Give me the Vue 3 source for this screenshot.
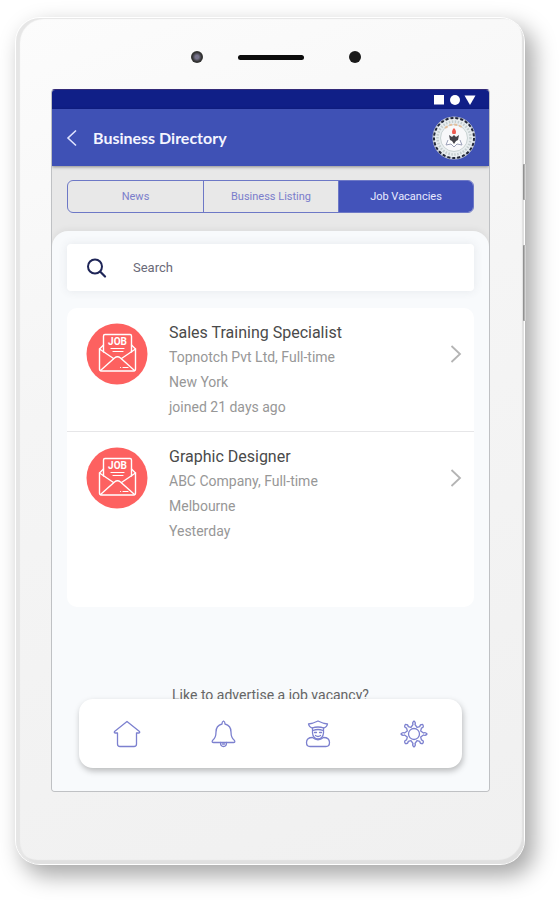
<template>
  <main class="stage">
    <div class="tablet">
      <span class="side-button side-button-power"></span>
      <span class="side-button side-button-volume"></span>

      <div class="camera-row">
        <span class="lens"></span>
        <span class="speaker"></span>
        <span class="sensor"></span>
      </div>

      <div class="screen">
        <div class="status-bar">
          <svg width="44" height="12" viewBox="0 0 44 12" fill="#fff" aria-hidden="true">
            <rect x="2" y="1" width="10" height="9.5" />
            <circle cx="23" cy="6" r="5" />
            <path d="M32.500 1.500H43.500L38 11Z" />
          </svg>
        </div>

        <header class="app-bar">
          <button class="back-button" type="button" aria-label="Back">
            <svg width="12" height="18" viewBox="0 0 12 18" aria-hidden="true">
              <path d="M10 1.500L2 9L10 16.500" fill="none" stroke="#dfe3ff" stroke-width="1.600" />
            </svg>
          </button>
          <h1 class="app-title">Business Directory</h1>
          <svg class="crest" width="44" height="44" viewBox="0 0 44 44" aria-hidden="true">
            <circle cx="22" cy="22" r="20.500" fill="#e9eef0" stroke="#c5cbd6" stroke-width="2" />
            <circle cx="22" cy="22" r="20" fill="none" stroke="#23283a" stroke-width="2" stroke-dasharray="3 2" />
            <circle cx="22" cy="22" r="16.500" fill="none" stroke="#c3cccd" stroke-width="2.500" stroke-dasharray="1.500 1.500" />
            <circle cx="22" cy="22" r="13.500" fill="#f8f8fa" stroke="#c9d3d3" />
            <path d="M13 12q9-7 18 0" fill="none" stroke="#e5bf9c" stroke-width="2" stroke-dasharray="3 2" />
            <path d="M16 24l-2 5 5-1 3 3 3-3 5 1-2-5" fill="#fff" stroke="#9ba0b8" />
            <path d="M17 19l3 2 2-2 2 2 3-2-1 5-2 1-2 3-2-3-2-1Z" fill="#44434a" />
            <path d="M22 12q3 3 1.500 6h-3q-1.500-3 1.500-6Z" fill="#ee5a50" />
          </svg>
        </header>

        <div class="tabs" role="tablist" aria-label="Directory sections">
          <button
            v-for="tab in tabs"
            :key="tab"
            class="tab"
            :class="{ active: tab === activeTab }"
            role="tab"
            type="button"
            :aria-selected="tab === activeTab"
            @click="activeTab = tab"
          >
            {{ tab }}
          </button>
        </div>

        <section class="panel">
          <div class="search">
            <label for="job-search" class="search-label" aria-label="Search">
              <svg width="20" height="20" viewBox="0 0 20 20" aria-hidden="true">
                <g fill="none" stroke="#1e2557" stroke-linecap="round">
                  <circle cx="8" cy="8.500" r="7" stroke-width="2" />
                  <path d="M13.300 13.800L18 18.500" stroke-width="2.200" />
                </g>
              </svg>
            </label>
            <input id="job-search" v-model="query" class="search-input" type="text" placeholder="Search">
          </div>

          <ul class="job-list">
            <li v-for="job in filteredJobs" :key="job.title" class="job">
              <a class="job-link" href="#" @click.prevent>
                <svg class="job-icon" width="62" height="62" viewBox="0 0 62 62" aria-hidden="true">
                  <circle cx="31" cy="31" r="30.500" fill="#fd6160" />
                  <g fill="none" stroke="#fff" stroke-width="1.400" stroke-linejoin="round" stroke-linecap="round">
                    <path d="M17.500 29V13Q17.500 11.500 19 11.500H44Q45.500 11.500 45.500 13V29" />
                    <path d="M17.500 22L13.500 26V46Q13.500 48 15.500 48H47.500Q49.500 48 49.500 46V26L45.500 22" />
                    <path d="M13.500 26L27.500 35.500M49.500 26L35.500 35.500" />
                    <path d="M14.500 47.500L28.500 35Q31.500 32.500 34.500 35L48.500 47.500" />
                    <path d="M25 25.500H38M27 28.500H37M37 44.500H42M34.500 44.500H34.600" stroke-width="1.200" />
                  </g>
                  <text x="31.500" y="22" class="job-icon-text">JOB</text>
                </svg>
                <div class="job-info">
                  <h2 class="job-title">{{ job.title }}</h2>
                  <p>{{ job.company }}, {{ job.type }}</p>
                  <p>{{ job.location }}</p>
                  <p>{{ job.posted }}</p>
                </div>
                <svg class="chevron" width="12" height="62" viewBox="0 0 12 62" aria-hidden="true">
                  <path d="M1.500 23L10 31L1.500 39" fill="none" stroke="#b4b4b4" stroke-width="1.800" />
                </svg>
              </a>
            </li>
          </ul>

          <p class="advert">Like to advertise a job vacancy?</p>
        </section>

        <nav class="bottom-nav" aria-label="Main">
          <a v-for="item in navItems" :key="item.label" class="nav-item" href="#" :aria-label="item.label" @click.prevent>
            <svg width="28" height="28" viewBox="0 0 28 28" aria-hidden="true">
              <g fill="none" stroke="#7c80cf" stroke-width="1.300" stroke-linejoin="round" stroke-linecap="round">
                <path v-for="d in item.paths" :key="d" :d="d" />
              </g>
            </svg>
          </a>
        </nav>
      </div>
    </div>
  </main>
</template>

<script setup>
import { computed, ref } from 'vue'

const tabs = ['News', 'Business Listing', 'Job Vacancies']
const activeTab = ref('Job Vacancies')
const query = ref('')

const jobs = [
  {
    title: 'Sales Training Specialist',
    company: 'Topnotch Pvt Ltd',
    type: 'Full-time',
    location: 'New York',
    posted: 'joined 21 days ago'
  },
  {
    title: 'Graphic Designer',
    company: 'ABC Company',
    type: 'Full-time',
    location: 'Melbourne',
    posted: 'Yesterday'
  }
]

const filteredJobs = computed(() =>
  jobs.filter((job) => job.title.toLowerCase().includes(query.value.toLowerCase()))
)

const navItems = [
  {
    label: 'Home',
    paths: ['M14 1.500L1.500 11.500Q.800 13 2.500 13H4.500V24Q4.500 26.500 7 26.500H21Q23.500 26.500 23.500 24V13H25.500Q27.200 13 26.500 11.500Z']
  },
  {
    label: 'Notifications',
    paths: [
      'M14.500 1Q13 1.500 13 4Q7 5.500 7 12Q7 18 3.500 20.500Q2.500 22.500 4.500 22.500H24.500Q26.500 22.500 25.500 20.500Q22 18 22 12Q22 5.500 16 4Q16 1.500 14.500 1Z',
      'M11.500 22.500Q11.500 26.500 14.500 26.500Q17.500 26.500 17.500 22.500M13.500 24H15.500'
    ]
  },
  {
    label: 'Profile',
    paths: [
      'M14 1Q9 3.500 4.500 4Q5 7 8 8Q14 6 20 8Q23 7 23.500 4Q19 3.500 14 1Z',
      'M8.500 8V13Q9 18.500 14 19Q19 18.500 19.500 13V8M9 10.500Q14 8.500 19 10.500',
      'M10.500 12.500H12.500M15.500 12.500H17.500M11.500 15.500Q14 17.500 16.500 15.500',
      'M8.500 17.500Q2.500 17.500 2.500 22.500Q2.500 26.500 6 26.500H22Q25.500 26.500 25.500 22.500Q25.500 17.500 19.500 17.500Q14 22 8.500 17.500Z'
    ]
  },
  {
    label: 'Settings',
    paths: [
      'M14 1Q16 2.500 15 4.500L17 7.300L19.800 6.600Q19.800 4.300 22.600 4.300Q24.600 7.300 21.400 8.200L20.700 11L23.500 13Q25.500 12 27 14Q25.500 16 23.500 15L20.700 17L21.400 19.800Q24.600 20.700 22.600 23.700Q19.800 23.700 19.800 21.400L17 20.700L15 23.500Q16 25.500 14 27Q12 25.500 13 23.500L11 20.700L8.200 21.400Q8.200 23.700 5.400 23.700Q3.400 20.700 6.600 19.800L7.300 17L4.500 15Q2.500 16 1 14Q2.500 12 4.500 13L7.300 11L6.600 8.200Q3.400 7.300 5.400 4.300Q8.200 4.300 8.200 6.600L11 7.300L13 4.500Q12 2.500 14 1Z',
      'M14 8.500A5.500 5.500 0 1 1 14 19.500A5.500 5.500 0 1 1 14 8.500Z'
    ]
  }
]
</script>

<style>
body {
  background: #fff;
}
</style>

<style scoped>
.stage {
  box-sizing: border-box;
  min-height: 900px;
  padding: 18px 35px 36px 16px;
  overflow: hidden;
  font-family: Roboto, "Liberation Sans", sans-serif;
}

.tablet {
  position: relative;
  padding: 0 34px 72px 35px;
  border-radius: 24px;
  background: linear-gradient(160deg, #fcfcfc, #f5f5f5 40%, #f0f0f0);
  box-shadow:
    inset 4px 1px 1px #e6e6e6,
    inset -2px -4px 1px #e0e0e0,
    0 0 0 1px #fff,
    1px 1px 1px 0 #b5b5b5,
    8px 10px 22px 2px rgba(0, 0, 0, 0.34);
}

/* hardware buttons stick out of the right edge */
.side-button {
  position: absolute;
  right: -2px;
  width: 3px;
  border-radius: 1px;
  background: linear-gradient(90deg, #808080, #e4e4e4);
}

.side-button-power {
  top: 146px;
  height: 36px;
}

.side-button-volume {
  top: 227px;
  height: 76px;
}

.camera-row {
  display: grid;
  grid-template-columns: 1fr 66px 1fr;
  align-items: center;
  height: 71px;
  padding-top: 7px;
  box-sizing: border-box;
}

.lens,
.sensor {
  width: 12px;
  height: 12px;
  border-radius: 50%;
  background: #1a1a1a;
}

.lens {
  justify-self: end;
  margin-right: 35px;
  background: radial-gradient(circle, #77748c 20%, #333 55%);
}

.speaker {
  height: 5px;
  border-radius: 3px;
  background: #0c0c0c;
}

.sensor {
  margin-left: 45px;
}

.screen {
  position: relative;
  border: 1px solid #bfc1c4;
  border-top-color: #332a78;
  border-radius: 4px;
  overflow: hidden;
  background: #e8e8e8;
}

.status-bar {
  display: flex;
  justify-content: flex-end;
  align-items: center;
  height: 19px;
  padding-right: 13px;
  background: #101f87;
}

.app-bar {
  position: relative;
  display: flex;
  align-items: center;
  height: 57px;
  padding: 0 13px 0 14px;
  background: #3f51b5;
  box-shadow: 0 1px 3px rgba(0, 0, 0, 0.4);
}

.back-button {
  display: flex;
  margin: 0;
  padding: 0;
  border: 0;
  background: none;
  cursor: pointer;
}

.app-title {
  flex: 1;
  margin: 0 0 0 15px;
  color: #f4f5ff;
  font-family: Lato, sans-serif;
  font-size: 16px;
  line-height: 24px;
  font-weight: 700;
}

.tabs {
  display: grid;
  grid-template-columns: repeat(3, 1fr);
  margin: 14px 15px 18px;
  border: 1px solid #6d78c6;
  border-radius: 6px;
  overflow: hidden;
}

.tab {
  height: 31px;
  padding: 0;
  border: 0;
  background: transparent;
  color: #7a7dcb;
  font-family: inherit;
  font-size: 11px;
  cursor: pointer;
}

.tab + .tab {
  border-left: 1px solid #6d78c6;
}

.tab.active {
  background: #4353ba;
  color: #e8eaff;
}

.panel {
  padding: 13px 15px 86px;
  border-radius: 16px 16px 0 0;
  background: #f8fafc;
  box-shadow: 0 -2px 6px rgba(0, 0, 0, 0.05);
}

.search {
  display: flex;
  align-items: center;
  height: 47px;
  margin-bottom: 17px;
  padding-left: 20px;
  border-radius: 4px;
  background: #fff;
  box-shadow: 0 0 10px rgba(60, 70, 90, 0.1);
}

.search-label {
  display: flex;
}

.search-input {
  flex: 1;
  min-width: 0;
  margin-left: 26px;
  padding: 0;
  border: 0;
  outline: none;
  background: transparent;
  color: #6a6a78;
  font-family: inherit;
  font-size: 13px;
  line-height: 18px;
}

.search-input::placeholder {
  color: #6a6a78;
  opacity: 1;
}

.job-list {
  box-sizing: border-box;
  min-height: 299px;
  margin: 0;
  padding: 0;
  border-radius: 10px;
  background: #fff;
  list-style: none;
}

.job + .job {
  border-top: 1px solid #e6e6e8;
}

.job-link {
  display: flex;
  align-items: flex-start;
  padding: 12px 12px 11px 19px;
  color: #979797;
  text-decoration: none;
}

.job-icon,
.chevron {
  flex: none;
  margin-top: 3px;
}

.job-icon-text {
  fill: #fff;
  font-size: 10px;
  font-weight: 700;
  text-anchor: middle;
}

.job-info {
  flex: 1;
  min-width: 0;
  margin-left: 21px;
  font-size: 14px;
  line-height: 25px;
}

.job-info p {
  margin: 0;
}

.job-title {
  margin: 0;
  color: #4a4a4a;
  font-size: 16px;
  line-height: 25px;
  font-weight: 400;
}

.advert {
  margin: 79px 0 0;
  color: #666;
  font-size: 14px;
  line-height: 19px;
  text-align: center;
}

.bottom-nav {
  position: absolute;
  right: 27px;
  bottom: 23px;
  left: 27px;
  display: grid;
  grid-template-columns: repeat(4, 1fr);
  height: 69px;
  border-radius: 14px;
  background: #fff;
  box-shadow: 1px 3px 6px rgba(0, 0, 0, 0.26);
}

.nav-item {
  display: flex;
  align-items: center;
  justify-content: center;
}
</style>
